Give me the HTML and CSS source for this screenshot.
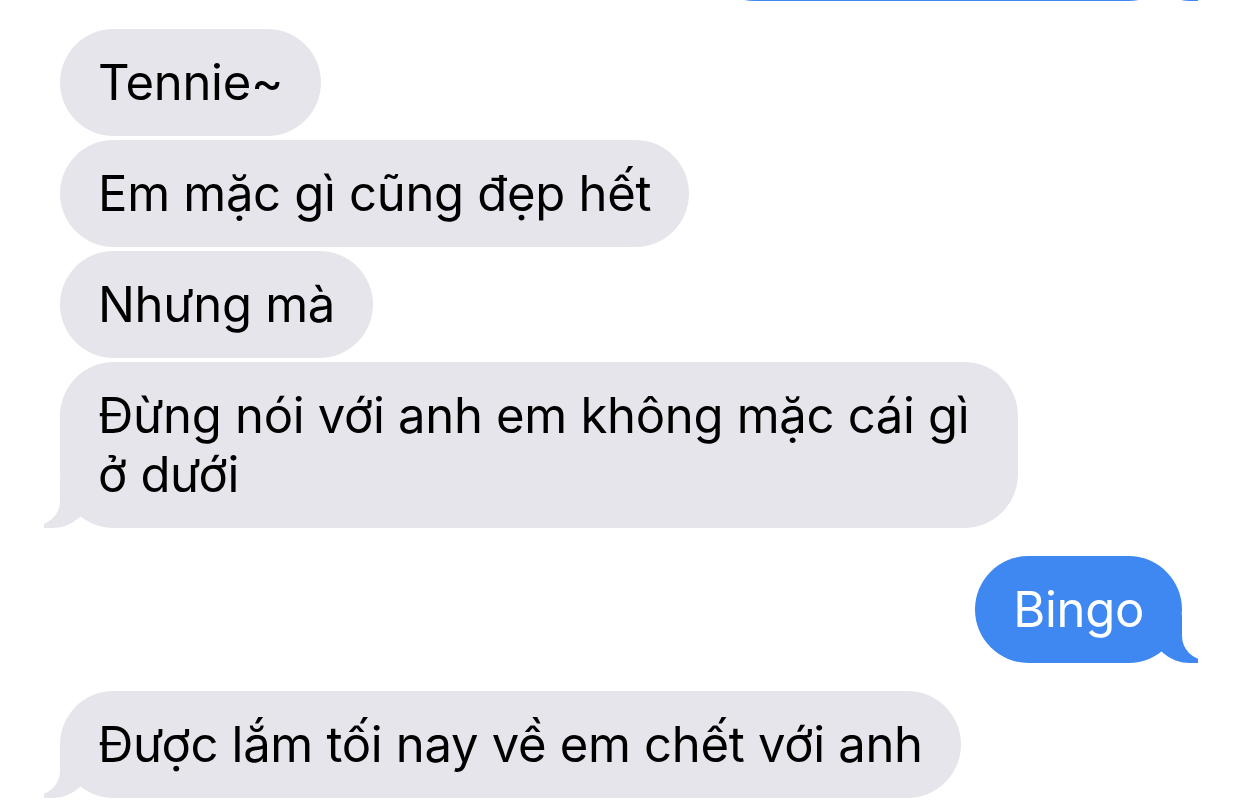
FILE: index.html
```html
<!DOCTYPE html>
<html lang="vi">
<head>
  <meta charset="UTF-8">
  <meta name="viewport" content="width=device-width, initial-scale=1.0">
  <title>Messages</title>
  <link rel="stylesheet" href="styles.css">
</head>
<body>
  <div class="chat">
    <!-- previous message, scrolled mostly out of view -->
    <div class="msg me tail">Em mặc váy ngắn</div>

    <div class="group">
      <div class="msg them">Tennie~</div>
      <div class="msg them">Em mặc gì cũng đẹp hết</div>
      <div class="msg them">Nhưng mà</div>
      <div class="msg them tail">Đừng nói với anh em không mặc cái gì ở dưới</div>
    </div>

    <div class="msg me tail">Bingo</div>

    <div class="msg them tail">Được lắm tối nay về em chết với anh</div>
  </div>
</body>
</html>
```

FILE: styles.css
```css
/* Global */
body {
  margin: 0;
  padding: 0;
  background: #fff;
  font-family: 'Inter', 'Noto Sans', sans-serif;
  overflow: hidden;
}
.chat {
  display: flex;
  flex-direction: column;
  gap: 28px;
  padding: 0 60px;
  margin-top: -106px;
}
.group {
  display: flex;
  flex-direction: column;
  gap: 4px;
}
.msg {
  position: relative;
  max-width: 882px;
  padding: 24px 38px;
  border-radius: 54px;
  font-size: 49px;
  line-height: 59px;
  letter-spacing: -0.3px;
  word-wrap: break-word;
}
.them {
  align-self: flex-start;
  background: #e6e5eb;
  color: #000;
}
.me {
  align-self: flex-end;
  background: #3f87f1;
  color: #fff;
}
/* tails */
.tail::before,
.tail::after {
  content: "";
  position: absolute;
  bottom: 0;
  height: 48px;
}
.them.tail::before {
  left: -16px;
  border-right: 46px solid #e6e5eb;
  border-bottom-right-radius: 38px 34px;
}
.them.tail::after {
  left: -60px;
  width: 60px;
  background: #fff;
  border-bottom-right-radius: 24px;
  transform: translateY(-3px);
}
.me.tail::before {
  right: -16px;
  border-left: 46px solid #3f87f1;
  border-bottom-left-radius: 38px 34px;
}
.me.tail::after {
  right: -60px;
  width: 60px;
  background: #fff;
  border-bottom-left-radius: 24px;
  transform: translateY(-3px);
}
```
